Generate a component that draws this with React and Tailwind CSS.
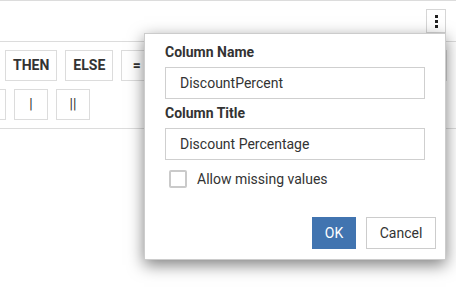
import React from "react";

const btn =
  "h-[31px] shrink-0 border border-[#dcdcdc] bg-white px-[7px] flex items-center justify-center text-[14px] font-bold text-[#333]";

export default function App() {
  return (
    <div
      className="relative w-[456px] h-[306px] overflow-hidden bg-white text-[#333]"
      style={{ fontFamily: "Roboto, 'Liberation Sans', sans-serif" }}
    >
      {/* header */}
      <div className="h-[42px] border-y border-[#dcdcdc] flex justify-end items-start pr-[10px] pt-[8px]">
        <div className="w-[20px] h-[24px] border border-[#d6d6d6] flex flex-col items-center justify-center gap-[2px]">
          <span className="block w-[3px] h-[3px] bg-[#222]" />
          <span className="block w-[3px] h-[3px] bg-[#222]" />
          <span className="block w-[3px] h-[3px] bg-[#222]" />
        </div>
      </div>

      {/* toolbar */}
      <div className="border-b border-[#dcdcdc] py-[8px] flex flex-col gap-[8px]">
        <div className="flex gap-[8px]">
          <div className={btn + " w-[40px] ml-[-43px]"} />
          <div className={btn}>THEN</div>
          <div className={btn}>ELSE</div>
          <div className={btn + " w-[31px]"}>=</div>
          <div className={btn + " w-[38px]"} />
          <div className={btn + " w-[31px]"} />
          <div className={btn + " w-[31px]"} />
          <div className={btn + " w-[38px]"} />
          <div className={btn + " w-[38px]"} />
          <div className={btn + " w-[31px]"} />
          <div className={btn + " w-[32px]"} />
        </div>
        <div className="flex gap-[8px]">
          <div className={btn + " w-[40px] ml-[-34px]"} />
          <div className={btn + " w-[34px] font-normal"}>|</div>
          <div className={btn + " w-[34px] font-normal"}>||</div>
        </div>
      </div>

      {/* dialog */}
      <div className="absolute left-[144px] top-[33px] w-[302px] bg-white border border-black/20 shadow-[0_5px_15px_rgba(0,0,0,0.5)] pt-[8px] pb-[10px] px-[20px] text-[14px] leading-[20px]">
        <div className="font-bold mb-[5px]">Column Name</div>
        <div className="h-[32px] border border-[#cfcfcf] pl-[14px] flex items-center">
          DiscountPercent
        </div>
        <div className="font-bold mt-[4px] mb-[5px]">Column Title</div>
        <div className="h-[32px] border border-[#cfcfcf] pl-[14px] flex items-center">
          Discount Percentage
        </div>
        <div className="mt-[8px] h-[22px] flex items-center pl-[4px]">
          <span className="block w-[18px] h-[18px] border-2 border-[#cacaca] rounded-[2px]" />
          <span className="ml-[10px]">Allow missing values</span>
        </div>
        <div className="mt-[27px] flex justify-end gap-[10px] mr-[-11px]">
          <div className="w-[44px] h-[32px] bg-[#4174b0] text-white flex items-center justify-center">
            OK
          </div>
          <div className="w-[70px] h-[32px] border border-[#cccccc] bg-white flex items-center justify-center">
            Cancel
          </div>
        </div>
      </div>
    </div>
  );
}
